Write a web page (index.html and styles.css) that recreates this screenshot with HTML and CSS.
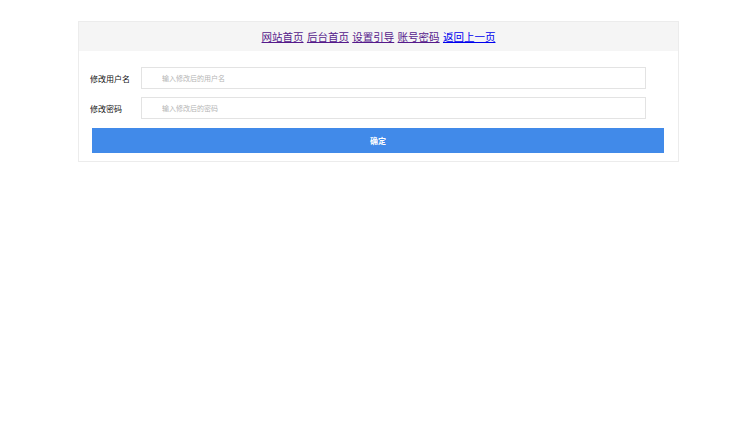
FILE: index.html
```html
<!DOCTYPE html>
<html lang="zh">
<head>
<meta charset="utf-8">
<title>修改账号密码</title>
<link rel="stylesheet" href="styles.css">
</head>
<body>
<div class="card">
  <div class="nav">
    <a class="visited" href="#">网站首页</a> <a class="visited" href="#">后台首页</a> <a class="visited" href="#">设置引导</a> <a class="visited" href="#">账号密码</a> <a class="fresh" href="#">返回上一页</a>
  </div>
  <form class="form">
    <div class="row">
      <label class="label">修改用户名</label>
      <input class="field" type="text" placeholder="输入修改后的用户名">
    </div>
    <div class="row">
      <label class="label">修改密码</label>
      <input class="field" type="password" placeholder="输入修改后的密码">
    </div>
    <button class="submit" type="button">确定</button>
  </form>
</div>
</body>
</html>
```

FILE: styles.css
```css
html, body {
  margin: 0;
  padding: 0;
  background: #ffffff;
}
body {
  font-family: "Liberation Serif", "Noto Sans CJK SC", serif;
}
.card {
  box-sizing: border-box;
  width: 601px;
  margin: 21px 0 0 78px;
  border: 1px solid #ececec;
  background: #ffffff;
}
.nav {
  height: 29px;
  line-height: 29px;
  background: #f5f5f5;
  text-align: center;
  font-size: 10.5px;
  font-family: "Noto Sans CJK SC", sans-serif;
}
.nav a {
  text-decoration: underline;
  margin: 0 0.5px;
}
.nav a.visited { color: #551a8b; }
.nav a.fresh { color: #0000ee; }
.form {
  display: flex;
  flex-direction: column;
  padding: 16px 13px 8px 11px;
  margin: 0;
}
.row {
  display: flex;
  align-items: center;
  height: 22px;
  margin-bottom: 8px;
}
.row + .row {
  margin-bottom: 9px;
}
.label {
  width: 51px;
  font-size: 8px;
  color: #111;
  font-family: "Noto Sans CJK SC", sans-serif;
}
.field {
  box-sizing: border-box;
  width: 505px;
  height: 22px;
  border: 1px solid #e3e3e3;
  padding: 0 0 0 20px;
  margin: 0;
  font-size: 7px;
  font-family: "Noto Sans CJK SC", sans-serif;
  outline: none;
}
.field::placeholder {
  color: #b5b5b5;
}
.submit {
  box-sizing: border-box;
  margin-left: 2px;
  width: 572px;
  height: 25px;
  border: none;
  background: #418ae9;
  color: #ffffff;
  font-size: 8px;
  font-weight: bold;
  font-family: "Noto Sans CJK SC", sans-serif;
  padding: 0;
}
```
